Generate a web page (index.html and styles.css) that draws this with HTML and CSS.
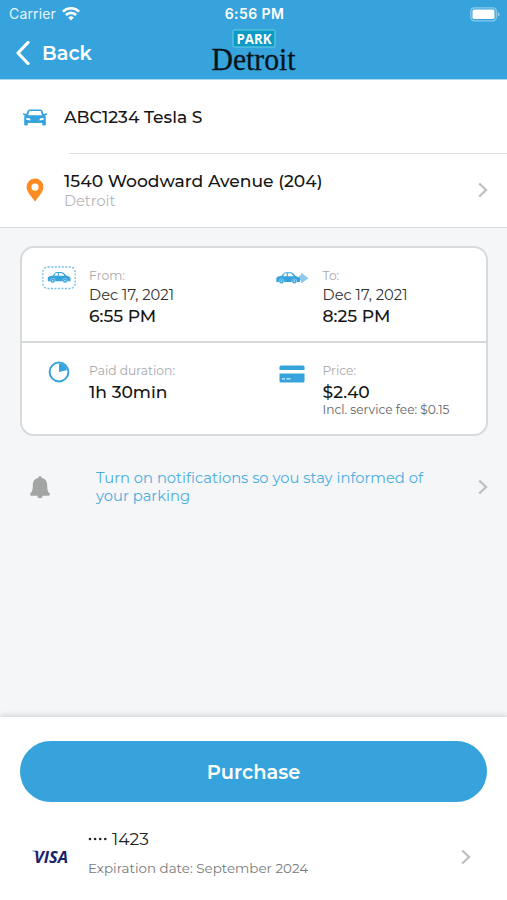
FILE: index.html
```html
<!DOCTYPE html>
<html lang="en">
<head>
<meta charset="utf-8">
<title>Park Detroit</title>
<link rel="stylesheet" href="styles.css">
</head>
<body>
<svg class="defs" width="0" height="0" aria-hidden="true">
  <symbol id="chevron" viewBox="0 0 10 16"><path d="M1.2 1.500 8 8l-6.800 6.500" fill="none" stroke="currentColor" stroke-width="2.400"/></symbol>
  <symbol id="side-car" viewBox="0 0 25 12">
    <path fill="currentColor" fill-rule="evenodd" d="M.8 10V6.600Q1 4.500 5.800 4.100L8.200 1.300Q9 .2 11 .2h3.500Q16.300.2 17.500 1.200L20.500 4.300Q24.500 4.900 24.500 7.500V10ZM7.700 4.200h3.500V1.300H10Q9.200 1.300 8.700 2.100ZM12.300 1.300v2.900h6L16.400 1.900Q15.800 1.300 14.500 1.300Z"/>
    <circle cx="6" cy="9.200" r="2.400" fill="#36a3dc" stroke="#b7ddf3" stroke-width=".6"/><circle cx="18.800" cy="9.200" r="2.400" fill="#36a3dc" stroke="#b7ddf3" stroke-width=".6"/>
    <circle cx="6" cy="9.200" r=".9" fill="#b7ddf3"/><circle cx="18.800" cy="9.200" r=".9" fill="#b7ddf3"/>
  </symbol>
</svg>
<header class="top">
  <div class="status">
    <div class="carrier"><span>Carrier</span>
      <svg width="18" height="14" viewBox="0 0 18 14" fill="none" stroke="#fff" stroke-width="2.600"><path d="M.9 4.600a11.500 11.500 0 0 1 16.200 0M3.900 8a7.200 7.200 0 0 1 10.200 0"/><path d="M6.200 10.500a4 4 0 0 1 5.600 0L9 13.400Z" fill="#fff" stroke="none"/></svg>
    </div>
    <span class="time">6:56 PM</span>
    <svg class="battery" width="30" height="15" viewBox="0 0 30 15"><rect x=".8" y=".8" width="25.500" height="13" rx="3.500" fill="none" stroke="#8bcaec" stroke-width="1.300"/><rect x="2.500" y="2.500" width="22" height="9.500" rx="1.500" fill="#fff"/><path d="M27.700 5v4.600q2-.7 2-2.300t-2-2.300" fill="#8bcaec"/></svg>
  </div>
  <div class="nav">
    <div class="back"><svg width="15" height="24" viewBox="0 0 15 24"><path d="M13 1.500 3 12l10 10.500" fill="none" stroke="#fff" stroke-width="3.200" stroke-linecap="round" stroke-linejoin="round"/></svg><span>Back</span></div>
    <svg class="logo" width="86" height="48" viewBox="0 0 86 48">
      <rect x="22" y="1" width="42" height="17" rx="1" fill="#0b9bc5" stroke="#68d1e3"/>
      <text class="logo-park" x="25.500" y="14.500" textLength="35" lengthAdjust="spacingAndGlyphs">PARK</text>
      <text class="logo-city" x=".5" y="41" textLength="84" lengthAdjust="spacingAndGlyphs">Detroit</text>
    </svg>
  </div>
</header>
<main>
  <section class="vehicle">
    <svg width="24" height="17" viewBox="0 0 24 17"><path fill="#36a3dc" fill-rule="evenodd" d="M6.500.5h11q1.500 0 2 1.500l1.200 3L23.500 4.300q.8.200.3 1.500l-1.700.8q.7.700.7 2V15.500q0 1-1 1h-1.600q-1 0-1-1V14H4.800v1.500q0 1-1 1H2.200q-1 0-1-1V8.600q0-1.300.7-2L.2 5.800Q-.3 4.500.5 4.300L3.300 5l1.200-3Q5 .5 6.500.5ZM6.300 2 5 6.200h14L17.700 2ZM3.300 9v1.800l4 .7q.5-1.800-1-2.200ZM20.700 9l-3 .3q-1.500.4-1 2.200l4-.7Z"/></svg>
    <span class="title plate">ABC1234 Tesla S</span>
  </section>
  <section class="place">
    <svg width="18" height="24" viewBox="0 0 18 24"><path fill="#fd8b20" fill-rule="evenodd" d="M9 .5a8.400 8.400 0 0 0-8.400 8.400C.6 14 5 17.500 9 23.500c4-6 8.400-9.500 8.400-14.600A8.400 8.400 0 0 0 9 .5Zm0 5a3.600 3.600 0 1 1 0 7.200 3.600 3.600 0 0 1 0-7.200Z"/></svg>
    <div class="address"><span class="title street">1540 Woodward Avenue (204)</span><span class="city">Detroit</span></div>
    <svg class="chev" width="10" height="16"><use href="#chevron"/></svg>
  </section>
  <section class="card">
    <div class="cell">
      <div class="icon"><svg width="34" height="24" viewBox="0 0 34 24"><rect x=".8" y="1" width="32.400" height="21.500" rx="5" fill="none" stroke="#72beea" stroke-width="1.300" stroke-dasharray="2 1.500"/><use href="#side-car" x="5" y="5.500" width="24" height="12"/></svg></div>
      <div class="info"><span class="label from">From:</span><span class="date">Dec 17, 2021</span><span class="title clock">6:55 PM</span></div>
    </div>
    <div class="cell">
      <div class="icon"><svg width="34" height="24" viewBox="0 0 34 24"><path fill="#8bcaed" d="m26 6.500 7.500 5.700-7.500 5.300v-3h-2V9.600h2Z"/><use href="#side-car" x="0" y="6" width="26" height="12"/></svg></div>
      <div class="info"><span class="label to">To:</span><span class="date">Dec 17, 2021</span><span class="title clock">8:25 PM</span></div>
    </div>
    <div class="cell">
      <div class="icon"><svg width="22" height="22" viewBox="0 0 22 22"><circle cx="11" cy="11" r="9.400" fill="none" stroke="#36a3dc" stroke-width="2"/><path d="M11 2.500a8.500 8.500 0 0 1 8.200 6.500L11 11Z" fill="#36a3dc"/></svg></div>
      <div class="info"><span class="label paid">Paid duration:</span><span class="title hours">1h 30min</span></div>
    </div>
    <div class="cell">
      <div class="icon card-icon"><svg width="26" height="18" viewBox="0 0 26 18"><path fill="#36a3dc" d="M.5 5V2Q.5.500 2 .5h22q1.500 0 1.500 1.500v3ZM.5 8.500h25V16q0 1.500-1.500 1.500H2Q.5 17.500.5 16Z"/><path d="M3 13.800h3m1.500 0h4" stroke="#d7effb" stroke-width="1.300"/></svg></div>
      <div class="info"><span class="label price">Price:</span><span class="title cost">$2.40</span><span class="fee">Incl. service fee: $0.15</span></div>
    </div>
  </section>
  <section class="notify">
    <svg width="20" height="23" viewBox="0 0 20 23"><path fill="#a3a5a5" d="M10 0q1.600 0 1.600 2c4 .7 5.600 3.500 5.600 7.200 0 5 .8 6.500 2.300 8.100.7.700.3 2.400-.7 2.400H1.200c-1 0-1.400-1.700-.7-2.400C2 15.700 2.800 14.200 2.800 9.200 2.800 5.500 4.400 2.700 8.400 2Q8.400 0 10 0ZM7.300 19.300h5.400a2.700 2.900 0 0 1-5.400 0Z"/></svg>
    <p><span>Turn on notifications so you stay informed of</span><br><span>your parking</span></p>
    <svg class="chev" width="10" height="16"><use href="#chevron"/></svg>
  </section>
</main>
<footer>
  <button class="buy"><span>Purchase</span></button>
  <div class="payment">
    <svg class="visa" width="38" height="20" viewBox="0 0 38 20"><text x="2" y="15.500" textLength="34" lengthAdjust="spacingAndGlyphs">VISA</text><path d="M0 3.700h5l1.500 2.500Q4 4.500 0 4.100Z" fill="#19216b"/></svg>
    <div class="method"><div class="number"><svg width="20" height="4" viewBox="0 0 20 4" fill="#222"><circle cx="2" cy="2" r="1.300"/><circle cx="7.100" cy="2" r="1.300"/><circle cx="12.200" cy="2" r="1.300"/><circle cx="17.300" cy="2" r="1.300"/></svg><span>1423</span></div><span class="expiry">Expiration date: September 2024</span></div>
    <svg class="chev" width="10" height="16"><use href="#chevron"/></svg>
  </div>
</footer>
</body>
</html>
```
FILE: styles.css
```css
* { box-sizing: border-box; }
body { margin: 0; width: 507px; height: 900px; display: flex; flex-direction: column; overflow: hidden; background: #f4f6f8; color: #151515; font-family: Montserrat, Inter, sans-serif; }
svg { display: block; flex: none; }
span { white-space: nowrap; }
.defs { position: absolute; }
.top { height: 80px; background: #36a3dc; color: #fff; border-bottom: 1px solid #a9d8f1; flex: none; }
.status { height: 28px; display: grid; grid-template-columns: 1fr auto 1fr; align-items: center; padding: 0 7px 0 9px; font: 500 14px/28px Inter, sans-serif; }
.carrier { display: flex; align-items: center; gap: 6px; font-weight: 400; color: #e5f5fd; letter-spacing: .15px; }
.time { letter-spacing: .4px; font-weight: 600; }
.battery { justify-self: end; }
.nav { height: 51px; display: grid; grid-template-columns: 1fr auto 1fr; padding: 0 15px; }
.back { display: flex; align-items: center; height: 49px; gap: 12px; font-size: 19.300px; font-weight: 600; }
.logo { margin-top: 1px; overflow: visible; }
.logo-park { font: 700 14.500px "Open Sans", sans-serif; fill: #fff; }
.logo-city { font: 31px "Liberation Serif", serif; fill: #07131a; stroke: #07131a; stroke-width: .3px; }
main { flex: 1; color: #36a3dc; }
.vehicle, .place { display: flex; background: #fff; align-items: center; }
.vehicle { height: 73px; padding: 1px 0 0 23px; gap: 17px; }
.place { height: 75px; border-bottom: 1px solid #d7d9da; padding: 0 19px 0 26px; gap: 20px; background: linear-gradient(#dedfe1, #dedfe1) 69px 0 / 438px 1px no-repeat #fff; }
.address { display: flex; flex-direction: column; flex: 1; }
.title { font-size: 17.150px; font-weight: 500; color: #151515; line-height: 22px; }
.city { font-size: 14.600px; line-height: 18px; color: #b5b6b8; }
.chev { color: #bfc1c3; }
.card { margin: 18px 19px 0 20px; height: 190px; display: grid; grid-template-columns: 233.500px 1fr; grid-template-rows: 95px 1fr; background: #fff; border: 2px solid #d8dbdc; border-radius: 14px; overflow: hidden; }
.cell { display: flex; padding-top: 17px; }
.cell:nth-child(-n+2) { border-bottom: 2px solid #d5d7d8; }
.icon { width: 67px; display: flex; justify-content: center; padding-left: 6px; height: 25px; align-items: flex-end; }
.cell:nth-child(n+3) .icon { align-items: center; height: 23px; }
.cell:nth-child(n+3) .card-icon { height: 24px; padding-top: 3px; }
.info { display: flex; flex-direction: column; padding-top: 1px; }
.label { font-size: 12.300px; line-height: 20px; color: #a8a9aa; }
.date { font-size: 14.700px; line-height: 18px; color: #303030; }
.clock { line-height: 23px; }
.hours, .cost { line-height: 22px; }
.fee { font-size: 12.200px; line-height: 13px; color: #626466; }
.notify { display: flex; align-items: center; padding: 0 19px 0 30px; margin-top: 33px; height: 36px; }
.notify p { margin: 0 0 0 46px; font-size: 14.750px; line-height: 18px; flex: 1; color: #4dade0; }
footer { height: 183px; flex: none; background: #fff; box-shadow: 0 -2px 5px #0002; padding: 24px 20px 0; }
.buy { width: 467px; height: 61px; border: 0; border-radius: 31px; background: #36a3dc; color: #fff; font: 600 19.400px/61px Montserrat, Inter, sans-serif; padding: 1px 0 0; display: block; }
.payment { display: flex; align-items: center; margin-top: 26px; padding: 0 16px 0 12px; height: 58px; }
.visa { overflow: visible; }
.visa text { font: italic 700 16px "Open Sans", sans-serif; fill: #19216b; }
.method { flex: 1; margin-left: 18px; display: flex; flex-direction: column; padding-bottom: 10px; }
.number { display: flex; align-items: center; gap: 4px; font-size: 17.150px; line-height: 22px; height: 22px; margin-bottom: 9px; color: #222; }
.expiry { font-size: 13.450px; line-height: 18px; color: #77797b; }
```
